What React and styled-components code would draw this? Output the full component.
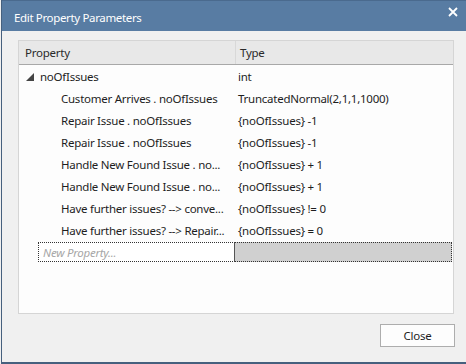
import styled, { createGlobalStyle } from 'styled-components';

const Global = createGlobalStyle`
  html, body {
    margin: 0;
    padding: 0;
    width: 466px;
    height: 364px;
    overflow: hidden;
    background: #f0f0f0;
  }
`;

const Window = styled.div`
  box-sizing: border-box;
  width: 466px;
  height: 364px;
  display: flex;
  flex-direction: column;
  background: #f0f0f0;
  border-left: 1px solid #46607e;
  border-bottom: 2px solid #46607e;
  margin-left: 1px;
  font-family: 'Noto Sans', 'Open Sans', sans-serif;
  font-size: 11.5px;
  letter-spacing: -0.25px;
  color: #1e1e1e;
`;

const TitleBar = styled.div`
  height: 31px;
  flex: none;
  display: flex;
  align-items: center;
  justify-content: space-between;
  background: #587ca3;
  border-top: 1px solid #4a6a8e;
  box-sizing: border-box;
  padding: 3px 9px 0 12px;
  color: #fff;
`;

const Title = styled.span`
  font-size: 11.5px;
  letter-spacing: -0.35px;
`;

const CloseX = styled.svg`
  width: 10px;
  height: 10px;
  margin-top: -12px;
`;

const Body = styled.div`
  flex: 1;
  display: flex;
  flex-direction: column;
  padding: 9px 13px 0 16px;
`;

const Grid = styled.div`
  height: 274px;
  box-sizing: border-box;
  border: 1px solid #d5d5d5;
  background: #fdfdfd;
  display: flex;
  flex-direction: column;
`;

const Row = styled.div`
  display: grid;
  grid-template-columns: 216px 1fr;
  height: ${p => p.$h || 22}px;
  align-items: center;
`;

const Header = styled(Row)`
  background: #e8e8e8;
  border-bottom: 1px solid #a8a8a8;
  height: 23px;
`;

const HeadCell = styled.div`
  padding-left: ${p => p.$pad}px;
  height: 100%;
  display: flex;
  align-items: center;
  border-left: ${p => (p.$divider ? '1px solid #d8d8d8' : 'none')};
  color: #2a2a2a;
`;

const Cell = styled.div`
  padding-left: ${p => p.$pad}px;
  white-space: nowrap;
  overflow: hidden;
  display: flex;
  align-items: center;
  gap: 6px;
`;

const Caret = styled.span`
  width: 0;
  height: 0;
  border-left: 8px solid transparent;
  border-bottom: 8px solid #444;
  margin-top: 1px;
`;

const NewRow = styled.div`
  display: grid;
  grid-template-columns: 197px 1fr;
  height: 20px;
  margin: 1px 0 0 19px;
  width: 414px;
`;

const NewInput = styled.div`
  box-sizing: border-box;
  border: 1px dotted #333;
  border-right: 1px solid #555;
  background: #fff;
  color: #a6a6a6;
  font-style: italic;
  padding-left: 4px;
  display: flex;
  align-items: center;
`;

const NewType = styled.div`
  box-sizing: border-box;
  border: 1px dotted #333;
  border-left: none;
  background: #d0d0d0;
`;

const Footer = styled.div`
  display: flex;
  justify-content: flex-end;
  padding-top: 10px;
`;

const Button = styled.button`
  width: 75px;
  height: 23px;
  box-sizing: border-box;
  border: 1px solid #adadad;
  background: #fdfdfd;
  font-family: inherit;
  font-size: 11.5px;
  letter-spacing: -0.25px;
  color: #1e1e1e;
  padding: 0;
  margin-right: -1px;
`;

const rows = [
  ['Customer Arrives . noOfIssues', 'TruncatedNormal(2,1,1,1000)'],
  ['Repair Issue . noOfIssues', '{noOfIssues} -1'],
  ['Repair Issue . noOfIssues', '{noOfIssues} -1'],
  ['Handle New Found Issue . no...', '{noOfIssues} + 1'],
  ['Handle New Found Issue . no...', '{noOfIssues} + 1'],
  ['Have further issues? --> conve...', '{noOfIssues} != 0'],
  ['Have further issues? --> Repair...', '{noOfIssues} = 0'],
];

export default function App() {
  return (
    <>
      <Global />
      <Window>
        <TitleBar>
          <Title>Edit Property Parameters</Title>
          <CloseX viewBox="0 0 10 10">
            <path d="M1 1 L9 9 M9 1 L1 9" stroke="#fff" strokeWidth="1.8" />
          </CloseX>
        </TitleBar>
        <Body>
          <Grid>
            <Header>
              <HeadCell $pad={6}>Property</HeadCell>
              <HeadCell $pad={4} $divider>Type</HeadCell>
            </Header>
            <Row $h={22}>
              <Cell $pad={7}>
                <Caret />
                noOfIssues
              </Cell>
              <Cell $pad={3}>int</Cell>
            </Row>
            {rows.map(([name, type], i) => (
              <Row key={i}>
                <Cell $pad={42}>{name}</Cell>
                <Cell $pad={3}>{type}</Cell>
              </Row>
            ))}
            <NewRow>
              <NewInput>New Property...</NewInput>
              <NewType />
            </NewRow>
          </Grid>
          <Footer>
            <Button>Close</Button>
          </Footer>
        </Body>
      </Window>
    </>
  );
}
